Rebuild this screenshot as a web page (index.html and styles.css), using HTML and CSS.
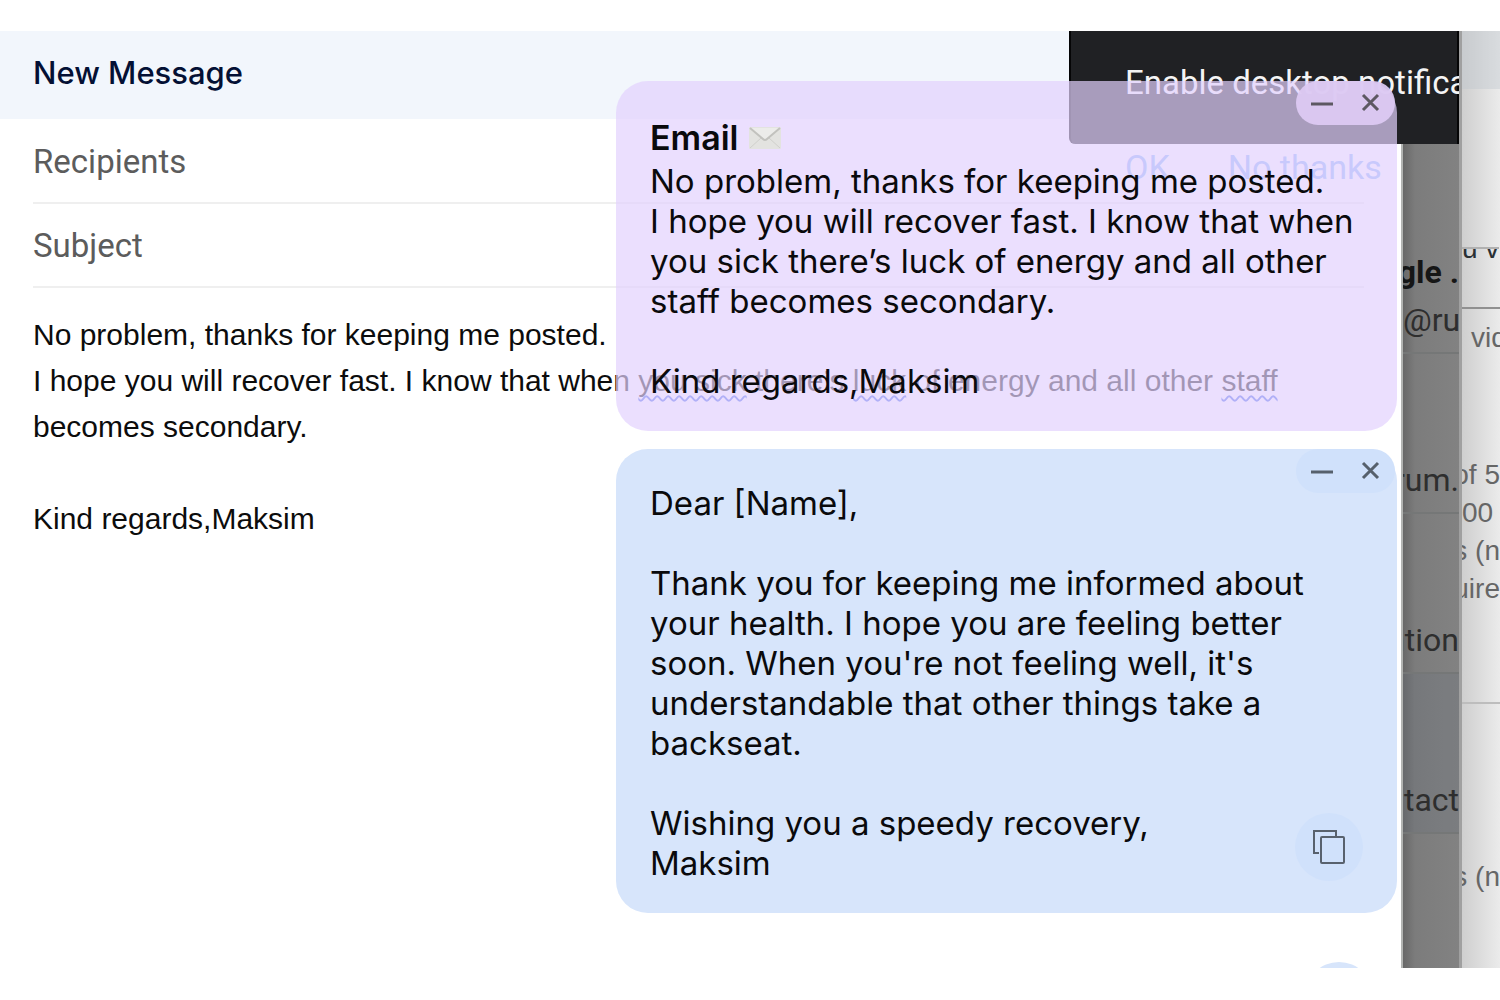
FILE: index.html
```html
<!DOCTYPE html>
<html lang="en">
<head>
<meta charset="utf-8">
<title>New Message</title>
<link rel="stylesheet" href="styles.css">
</head>
<body>
<main class="stage">
  <section class="compose" aria-label="New message">
    <header class="compose-header"><h1 class="compose-title">New Message</h1></header>
    <form class="compose-form">
      <input class="field" type="text" aria-label="Recipients" placeholder="Recipients">
      <input class="field" type="text" aria-label="Subject" placeholder="Subject">
      <div class="message" contenteditable="true" role="textbox" aria-label="Message body" spellcheck="false">
        <p>No problem, thanks for keeping me posted.</p>
        <p>I hope you will recover fast. I know that when <span class="typo">you sick</span> there’s <span class="typo">luck</span> of energy and all other <span class="typo">staff</span> becomes secondary.</p>
        <p><br></p>
        <p>Kind regards,Maksim</p>
      </div>
    </form>
  </section>

  <aside class="inbox">
    <div class="inbox-row inbox-first">
      <strong class="inbox-from flush">gle .</strong>
      <span class="inbox-mail">@ru</span>
    </div>
    <div class="inbox-row"><span class="flush">rum.</span></div>
    <div class="inbox-row"><span class="flush">ntion</span></div>
    <div class="inbox-row selected"><span class="flush">ntact</span></div>
  </aside>

  <aside class="page">
    <div class="page-bar"></div>
    <div class="page-heading"><span>u v</span></div>
    <div class="page-lead">vid</div>
    <ul class="page-list">
      <li class="flush-left">of 5</li>
      <li>00</li>
      <li class="flush-left">s (n</li>
      <li class="flush-left">uire</li>
    </ul>
    <ul class="page-list last"><li class="flush-left">s (n</li></ul>
  </aside>

  <div class="notice" role="alert">
    <p class="notice-text">Enable desktop notifications</p>
    <div class="notice-actions">
      <button type="button">OK</button>
      <button type="button">No thanks</button>
    </div>
  </div>

  <div class="cards">
    <article class="card card-source">
      <div class="controls">
        <button type="button" aria-label="Minimize"><svg width="22" height="22" viewBox="0 0 22 22"><path d="M0 12H22" /></svg></button>
        <button type="button" aria-label="Close"><svg width="20" height="22" viewBox="0 0 20 22"><path d="M3 3L18 18M18 3L3 18" /></svg></button>
      </div>
      <h2 class="card-title">Email
        <svg class="envelope" width="32" height="22" viewBox="0 0 32 22" aria-hidden="true"><rect x="0" y="0" width="32" height="22" rx="1" fill="#e3e3e0"/><path d="M1 21L12 11M31 21L20 11" stroke="#d0d0cc" stroke-width="1" fill="none"/><path d="M1 1L14 12Q16 14 18 12L31 1" stroke="#c2c2be" stroke-width="2" fill="#ececea"/></svg>
      </h2>
      <p>No problem, thanks for keeping me posted.</p>
      <p>I hope you will recover fast. I know that when you sick there’s luck of energy and all other staff becomes secondary.</p>
      <p><br></p>
      <p>Kind regards,Maksim</p>
    </article>

    <article class="card card-reply">
      <div class="controls">
        <button type="button" aria-label="Minimize"><svg width="22" height="22" viewBox="0 0 22 22"><path d="M0 12H22" /></svg></button>
        <button type="button" aria-label="Close"><svg width="20" height="22" viewBox="0 0 20 22"><path d="M3 3L18 18M18 3L3 18" /></svg></button>
      </div>
      <p>Dear [Name],</p>
      <p><br></p>
      <p>Thank you for keeping me informed about your health. I hope you are feeling better soon. When you're not feeling well, it's understandable that other things take a backseat.</p>
      <p><br></p>
      <p>Wishing you a speedy recovery,<br>Maksim</p>
      <button class="copy" type="button" aria-label="Copy"><svg width="34" height="36" viewBox="0 0 34 36"><path d="M7 24H2V2H24V7" /><rect x="9" y="8" width="23" height="26" rx="1"/></svg></button>
    </article>
    <button class="fab" type="button" aria-label="More replies"></button>
  </div>
</main>
</body>
</html>
```
FILE: styles.css
```css
* { box-sizing: border-box; }

body {
  margin: 0;
  background: #fff;
  font-family: Inter, sans-serif;
  color: #0a0a0c;
}

h1, h2, p, ul { margin: 0; padding: 0; }
ul { list-style: none; }
button { border: 0; background: none; padding: 0; font: inherit; cursor: pointer; }
svg { fill: none; display: block; }

.stage {
  position: relative;
  display: grid;
  grid-template-columns: 1fr 58px 41px;
  height: calc(100vh - 63px);
  min-height: 936px;
  margin: 31px 0 32px;
  overflow: hidden;
}

/* compose window */
.compose { min-width: 0; background: #fff; }

.compose-header {
  display: flex;
  align-items: center;
  height: 88px;
  padding: 0 33px 4px;
  background: #f2f6fc;
}

.compose-title {
  font: 500 31px/40px Inter, sans-serif;
  color: #041034;
}

.compose-form { display: flex; flex-direction: column; padding: 1px 37px 0 33px; }

.field {
  height: 84px;
  padding: 0;
  border: 0;
  border-bottom: 2px solid #efefef;
  outline: 0;
  background: none;
  font: 33px/40px Roboto, sans-serif;
}
.field::placeholder { color: #5c5c5c; opacity: 1; }

.message {
  padding-top: 24px;
  outline: 0;
  font: 30px/46px "Liberation Sans", sans-serif;
  color: #0c0c0c;
}

.typo { text-decoration: underline wavy #3c62e8 2px; text-underline-offset: 4px; text-decoration-skip-ink: none; }

/* dimmed inbox column */
.inbox {
  overflow: hidden;
  border-left: 2px solid #b2b4b2;
  background: linear-gradient(90deg, #686868, #7c7c7c 12px, #828282);
  font: 32px/40px Roboto, sans-serif;
  color: #2e2e2e;
}

.inbox-row {
  display: flex;
  flex-direction: column;
  justify-content: flex-end;
  height: 160px;
  padding-bottom: 12px;
  border-bottom: 2px solid #757777;
  white-space: nowrap;
}
.inbox-first { height: 323px; gap: 8px; }
.inbox-from { color: #161616; }
.inbox-row .flush { align-self: flex-end; }
.selected { background: rgba(100, 110, 125, 0.22); }

/* page behind */
.page {
  overflow: hidden;
  border-left: 3px solid #a0a0a0;
  background: linear-gradient(90deg, #cfcfcf, #ebebeb);
  font: 28px/38px "Liberation Sans", sans-serif;
  color: #666;
  white-space: nowrap;
}
.page-bar { height: 58px; background: rgba(190, 198, 206, 0.4); }
.page-heading {
  display: flex;
  align-items: flex-end;
  height: 220px;
  padding-top: 160px;
  border-bottom: 2px solid #909090;
}
.page-heading span {
  height: 60px;
  overflow: hidden;
  border-top: 2px solid #b0b0b0;
  line-height: 0;
  color: #2a3034;
}
.page-lead { padding: 10px 0 0 9px; }
.page-list { padding: 99px 0 94px; border-bottom: 2px solid #bdbdbd; }
.page-list.last { padding-top: 154px; border: 0; }
.flush-left { display: flex; justify-content: flex-end; }

/* notification prompt */
.notice {
  position: absolute;
  top: 0;
  right: 41px;
  width: 390px;
  overflow: hidden;
  font: 33px/40px Roboto, sans-serif;
}
.notice-text {
  height: 113px;
  padding: 32px 0 0 54px;
  border: solid #050506;
  border-width: 0 2px;
  border-radius: 0 0 0 6px;
  background: #202124;
  color: #f4f4f4;
  white-space: nowrap;
}
.notice-actions { display: flex; gap: 58px; padding: 3px 0 12px 56px; color: #8ab4f8; }
.notice-actions button { font-size: 34px; color: inherit; }

/* floating cards */
.cards {
  position: absolute;
  top: 50px;
  right: 103px;
  display: flex;
  flex-direction: column;
  gap: 18px;
  width: 781px;
  font: 33px/40px Inter, sans-serif;
}

.card { position: relative; padding: 34px 34px 30px; border-radius: 32px; }
.card-source { background: rgba(226, 209, 253, 0.7); }
.card-reply { background: #d7e5fb; }

.card-title {
  display: flex;
  align-items: center;
  gap: 10px;
  font-size: 34px;
  font-weight: 600;
  line-height: 46px;
}

.controls {
  position: absolute;
  top: 0;
  right: 2px;
  display: flex;
  align-items: center;
  justify-content: space-between;
  width: 99px;
  height: 44px;
  padding: 0 15px;
  border-radius: 22px;
}
.controls svg { stroke: #5d5862; stroke-width: 3; }
.card-source .controls { background: rgba(220, 201, 242, 0.95); }
.card-reply .controls { background: #d0e1fb; }
.card-reply .controls svg { stroke: #56606c; }

.copy {
  position: absolute;
  right: 34px;
  bottom: 32px;
  display: grid;
  place-items: center;
  width: 68px;
  height: 68px;
  border-radius: 50%;
  background: #d0e1fb;
}
.copy svg { stroke: #58616d; stroke-width: 2; }

.fab {
  align-self: flex-end;
  width: 68px;
  height: 68px;
  margin: 31px 24px 0 0;
  border-radius: 50%;
  background: #d7e5fb;
}
```
